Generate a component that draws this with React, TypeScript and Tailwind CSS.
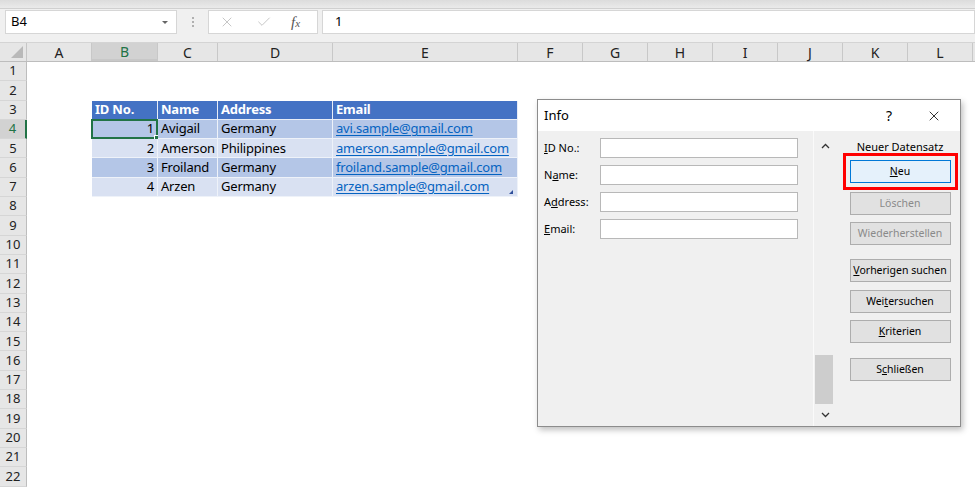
import { X, Check } from "lucide-react";

type Col = { k: string; w: string };

const COLS: Col[] = [
  { k: "A", w: "w-[65px]" },
  { k: "B", w: "w-[66px]" },
  { k: "C", w: "w-[60px]" },
  { k: "D", w: "w-[115px]" },
  { k: "E", w: "w-[185px]" },
  { k: "F", w: "w-[65px]" },
  { k: "G", w: "w-[65px]" },
  { k: "H", w: "w-[65px]" },
  { k: "I", w: "w-[65px]" },
  { k: "J", w: "w-[65px]" },
  { k: "K", w: "w-[65px]" },
  { k: "L", w: "w-[65px]" },
];

const HEAD = ["ID No.", "Name", "Address", "Email"];

const DATA = [
  ["1", "Avigail", "Germany", "avi.sample@gmail.com"],
  ["2", "Amerson", "Philippines", "amerson.sample@gmail.com"],
  ["3", "Froiland", "Germany", "froiland.sample@gmail.com"],
  ["4", "Arzen", "Germany", "arzen.sample@gmail.com"],
];

const ROWS = Array.from({ length: 22 }, (_, i) => i + 1);

const Cell = ({ row, col }: { row: number; col: Col }) => {
  const idx = ["B", "C", "D", "E"].indexOf(col.k);
  if (idx < 0 || row < 3 || row > 7) {
    return <div className={`${col.w} h-full shrink-0`} />;
  }
  if (row === 3) {
    return (
      <div
        className={`${col.w} h-full shrink-0 bg-[#4472c4] border-r border-b border-[#e8edf7] text-white font-bold px-[3px] flex items-center whitespace-nowrap`}
      >
        {HEAD[idx]}
      </div>
    );
  }
  const value = DATA[row - 4][idx];
  const fill = row % 2 === 0 ? "bg-[#b4c6e7]" : "bg-[#d9e1f2]";
  return (
    <div
      className={`${col.w} h-full shrink-0 ${fill} relative border-r border-b border-[#eef2f9] px-[3px] flex items-center whitespace-nowrap ${
        idx === 0 ? "justify-end" : ""
      }`}
    >
      {idx === 3 ? (
        <span className="text-[#0563c1] underline underline-offset-2">{value}</span>
      ) : (
        <span className="text-black">{value}</span>
      )}
      {row === 4 && idx === 0 && (
        <div className="absolute -left-px -top-px -right-px -bottom-px border-2 border-[#217346]">
          <div className="absolute -right-[4px] -bottom-[4px] w-[6px] h-[6px] bg-[#217346] border border-white" />
        </div>
      )}
      {row === 7 && idx === 3 && (
        <div className="absolute right-[4px] bottom-[2px] w-0 h-0 border-l-[4px] border-l-transparent border-b-[4px] border-b-[#2f4f9b]" />
      )}
    </div>
  );
};

const DlgButton = ({
  children,
  disabled,
  active,
  className = "",
}: {
  children: React.ReactNode;
  disabled?: boolean;
  active?: boolean;
  className?: string;
}) => (
  <div
    className={`w-[101px] h-[23px] flex items-center justify-center border text-[10.5px] whitespace-nowrap ${
      active
        ? "bg-[#e5f1fb] border-[#0078d7] outline-3 outline-[#ff0000] outline-offset-[4px]"
        : "bg-[#e1e1e1] border-[#adadad]"
    } ${disabled ? "text-[#8a8a8a]" : "text-black"} ${className}`}
  >
    {children}
  </div>
);

const Field = ({ label }: { label: React.ReactNode }) => (
  <div className="flex items-center h-[20px]">
    <div className="w-[56px] text-[11px] text-black">{label}</div>
    <div className="w-[198px] h-[20px] bg-white border border-[#b8b8b8]" />
  </div>
);

export default function App() {
  return (
    <div className="relative w-[975px] h-[488px] overflow-hidden bg-white font-['Noto_Sans',sans-serif]">
      {/* ribbon bottom + formula bar */}
      <div className="h-[43px] bg-[#f0f0f0] border-b border-[#d4d4d4] flex flex-col">
        <div className="h-[9px] bg-gradient-to-b from-[#dcdcdc] to-[#eaeaea] border-b border-[#d0d0d0]" />
        <div className="flex items-center h-[24px] mt-px">
          <div className="ml-[5px] w-[172px] h-[24px] bg-white border border-[#d6d6d6] flex items-center justify-between px-[5px] text-[13px] text-black">
            <span>B4</span>
            <span className="w-0 h-0 border-l-[3px] border-r-[3px] border-t-[3px] border-l-transparent border-r-transparent border-t-[#666] mr-[3px]" />
          </div>
          <div className="w-[31px] flex flex-col items-center gap-[2px]">
            <span className="w-[2px] h-[2px] bg-[#b0b0b0]" />
            <span className="w-[2px] h-[2px] bg-[#b0b0b0]" />
            <span className="w-[2px] h-[2px] bg-[#b0b0b0]" />
          </div>
          <div className="w-[110px] h-[24px] bg-white border border-[#d6d6d6] flex items-center">
            <X size={16} strokeWidth={1.2} className="text-[#b8b8b8] ml-[10px]" />
            <Check size={16} strokeWidth={1.2} className="text-[#b8b8b8] ml-[21px]" />
            <span className="ml-[19px] text-[15px] italic text-[#555] font-['Liberation_Serif',serif]">
              f<span className="text-[11px]">x</span>
            </span>
          </div>
          <div className="ml-[4px] flex-1 h-[24px] bg-white border border-[#d6d6d6] flex items-center pl-[12px] text-[13px] text-black">
            1
          </div>
        </div>
      </div>

      {/* column headers */}
      <div className="flex h-[19px] bg-[#e6e6e6] border-b border-[#bdbdbd]">
        <div className="w-[27px] shrink-0 border-r border-[#c6c6c6] relative">
          <div className="absolute right-[3px] bottom-[3px] w-0 h-0 border-l-[12px] border-l-transparent border-b-[12px] border-b-[#b9b9b9]" />
        </div>
        {COLS.map((c) => (
          <div
            key={c.k}
            className={`${c.w} shrink-0 flex items-center justify-center text-[14px] ${
              c.k === "B"
                ? "bg-[#d2d2d2] text-[#217346] border-b-2 border-[#217346]"
                : "text-[#222]"
            } border-r border-[#c8c8c8]`}
          >
            {c.k}
          </div>
        ))}
      </div>

      {/* rows */}
      <div className="flex flex-col text-[13px] tracking-[-0.2px]">
        {ROWS.map((r) => (
          <div key={r} className="flex h-[19.3px] shrink-0">
            <div
              className={`w-[27px] shrink-0 flex items-center justify-center text-[13px] tracking-normal border-b border-[#d6d6d6] ${
                r === 4
                  ? "bg-[#d2d2d2] text-[#217346] border-r-2 border-r-[#217346]"
                  : "bg-[#e6e6e6] text-[#222] border-r border-r-[#bdbdbd]"
              }`}
            >
              {r}
            </div>
            {COLS.map((c) => (
              <Cell key={c.k} row={r} col={c} />
            ))}
          </div>
        ))}
      </div>

      {/* Data form dialog */}
      <div className="absolute left-[537px] top-[99px] w-[424px] h-[328px] border border-[#8c8c8c] bg-[#f0f0f0] shadow-[2px_3px_6px_rgba(0,0,0,0.25)] flex flex-col">
        <div className="h-[31px] bg-white flex items-center pl-[6px] text-[13px] text-black">
          <span className="flex-1">Info</span>
          <span className="w-[20px] text-center text-[14px] mr-[27px]">?</span>
          <X size={16} strokeWidth={1.2} className="mr-[18px]" />
        </div>
        <div className="flex flex-1">
          <div className="w-[275px] pt-[7px] pl-[6px] flex flex-col gap-[7px]">
            <Field label={<><u>I</u>D No.:</>} />
            <Field label={<>N<u>a</u>me:</>} />
            <Field label={<>A<u>d</u>dress:</>} />
            <Field label={<><u>E</u>mail:</>} />
          </div>
          <div className="w-[21px] border-l border-[#fafafa] flex flex-col items-center pt-[12px] pb-[8px]">
            <svg width="9" height="6" viewBox="0 0 9 6" className="ml-[2px]">
              <path d="M1 5 L4.5 1.5 L8 5" fill="none" stroke="#333" strokeWidth="1.3" />
            </svg>
            <div className="flex-1" />
            <div className="w-[18px] h-[49px] bg-[#cdcdcd] mb-[8px]" />
            <svg width="9" height="6" viewBox="0 0 9 6" className="ml-[2px]">
              <path d="M1 1 L4.5 4.5 L8 1" fill="none" stroke="#333" strokeWidth="1.3" />
            </svg>
          </div>
          <div className="flex-1 flex flex-col items-center pl-[6px] pt-[9px] text-[11px] text-black">
            <div className="h-[14px] leading-[14px] whitespace-nowrap">Neuer Datensatz</div>
            <DlgButton active className="mt-[6px]">
              <span><u>N</u>eu</span>
            </DlgButton>
            <DlgButton disabled className="mt-[9px]">Löschen</DlgButton>
            <DlgButton disabled className="mt-[7px]">Wiederherstellen</DlgButton>
            <DlgButton className="mt-[14px]">
              <span><u>V</u>orherigen suchen</span>
            </DlgButton>
            <DlgButton className="mt-[8px]">
              <span>Wei<u>t</u>ersuchen</span>
            </DlgButton>
            <DlgButton className="mt-[7px]">
              <span><u>K</u>riterien</span>
            </DlgButton>
            <DlgButton className="mt-[15px]">
              <span>S<u>c</u>hließen</span>
            </DlgButton>
          </div>
        </div>
      </div>
    </div>
  );
}
